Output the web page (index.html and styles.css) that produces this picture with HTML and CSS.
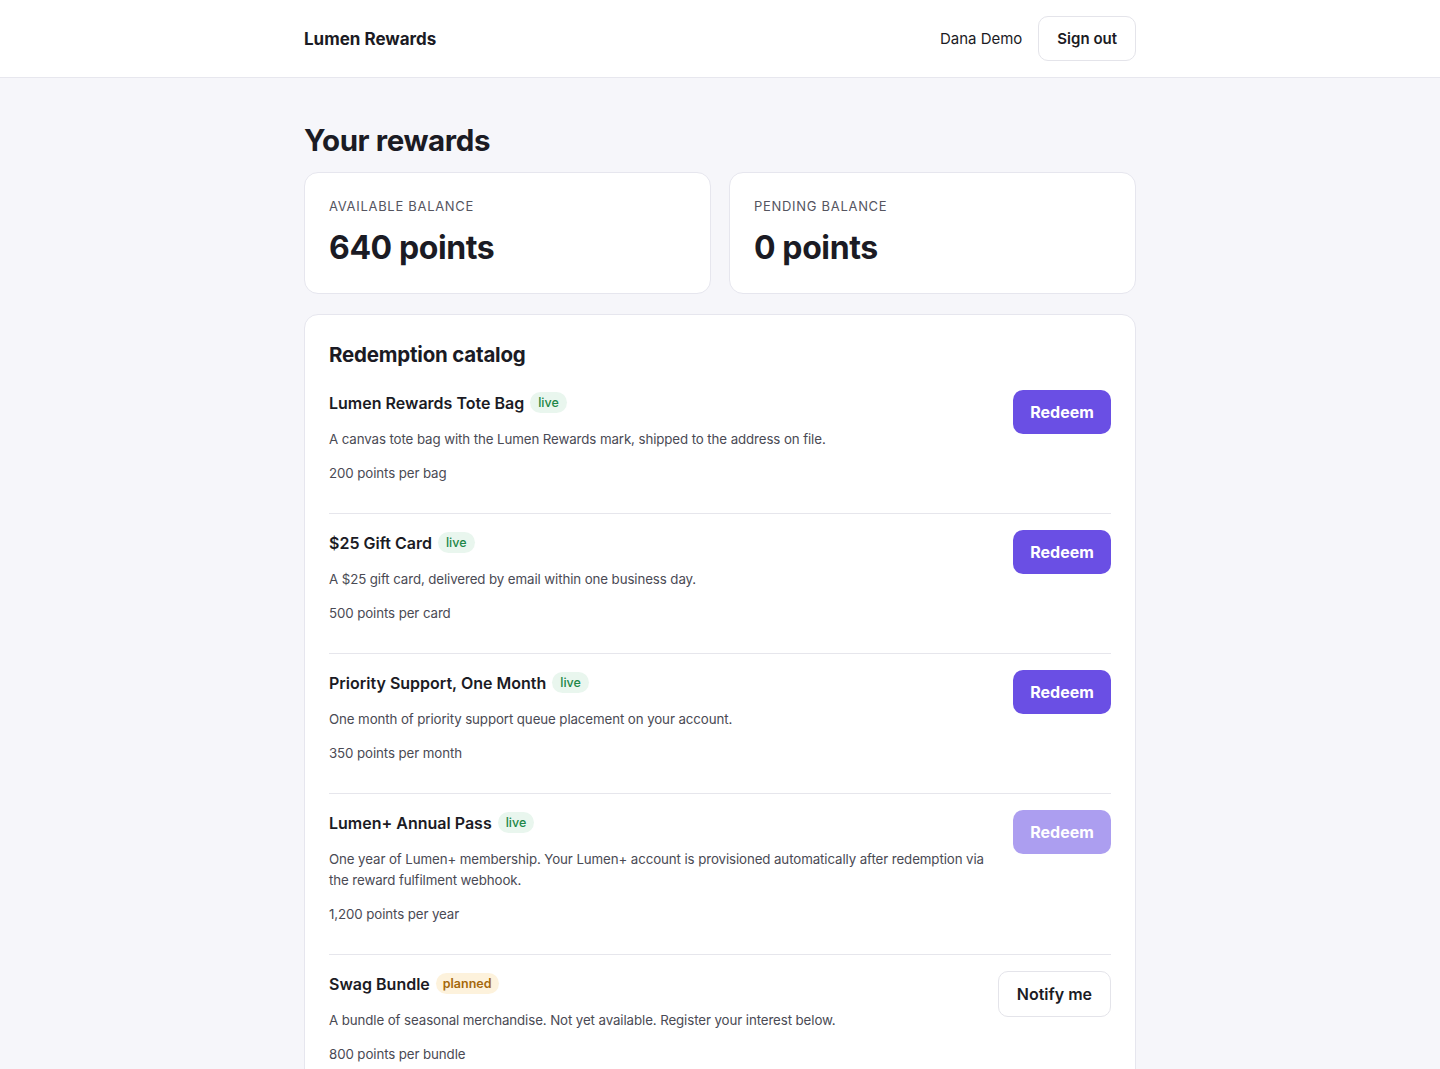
FILE: index.html
```html
<!DOCTYPE html>
<html lang="en">
<head>
<meta charset="utf-8">
<title>Lumen Rewards</title>
<link rel="stylesheet" href="styles.css">
</head>
<body>
<header class="topbar">
  <div class="container topbar-inner">
    <div class="brand">Lumen Rewards</div>
    <div class="user">
      <span class="user-name">Dana Demo</span>
      <button class="btn btn-outline">Sign out</button>
    </div>
  </div>
</header>
<main class="container main">
  <h1 class="page-title">Your rewards</h1>
  <section class="balances">
    <div class="card balance-card">
      <div class="balance-label">AVAILABLE BALANCE</div>
      <div class="balance-value">640 points</div>
    </div>
    <div class="card balance-card">
      <div class="balance-label">PENDING BALANCE</div>
      <div class="balance-value">0 points</div>
    </div>
  </section>
  <section class="card catalog">
    <h2 class="catalog-title">Redemption catalog</h2>
    <div class="item">
      <div class="item-body">
        <div class="item-head"><span class="item-name">Lumen Rewards Tote Bag</span><span class="badge badge-live">live</span></div>
        <p class="item-desc">A canvas tote bag with the Lumen Rewards mark, shipped to the address on file.</p>
        <p class="item-price">200 points per bag</p>
      </div>
      <button class="btn btn-primary">Redeem</button>
    </div>
    <div class="item">
      <div class="item-body">
        <div class="item-head"><span class="item-name">$25 Gift Card</span><span class="badge badge-live">live</span></div>
        <p class="item-desc">A $25 gift card, delivered by email within one business day.</p>
        <p class="item-price">500 points per card</p>
      </div>
      <button class="btn btn-primary">Redeem</button>
    </div>
    <div class="item">
      <div class="item-body">
        <div class="item-head"><span class="item-name">Priority Support, One Month</span><span class="badge badge-live">live</span></div>
        <p class="item-desc">One month of priority support queue placement on your account.</p>
        <p class="item-price">350 points per month</p>
      </div>
      <button class="btn btn-primary">Redeem</button>
    </div>
    <div class="item">
      <div class="item-body">
        <div class="item-head"><span class="item-name">Lumen+ Annual Pass</span><span class="badge badge-live">live</span></div>
        <p class="item-desc">One year of Lumen+ membership. Your Lumen+ account is provisioned automatically after redemption via the reward fulfilment webhook.</p>
        <p class="item-price">1,200 points per year</p>
      </div>
      <button class="btn btn-primary" disabled>Redeem</button>
    </div>
    <div class="item">
      <div class="item-body">
        <div class="item-head"><span class="item-name">Swag Bundle</span><span class="badge badge-planned">planned</span></div>
        <p class="item-desc">A bundle of seasonal merchandise. Not yet available. Register your interest below.</p>
        <p class="item-price">800 points per bundle</p>
      </div>
      <button class="btn btn-outline btn-notify">Notify me</button>
    </div>
  </section>
</main>
</body>
</html>
```

FILE: styles.css
```css
* { box-sizing: border-box; }
html, body { margin: 0; padding: 0; }
body {
  font-family: Inter, "Noto Sans", "Liberation Sans", sans-serif;
  background: #f6f6fa;
  color: #1b1b24;
}
.container {
  width: 832px;
  margin: 0 auto;
}
.topbar {
  background: #ffffff;
  border-bottom: 1px solid #e7e7ee;
}
.topbar-inner {
  height: 77px;
  display: flex;
  align-items: center;
  justify-content: space-between;
}
.brand {
  font-size: 17px;
  font-weight: 700;
  color: #1b1b24;
}
.user {
  display: flex;
  align-items: center;
  gap: 16px;
}
.user-name {
  font-size: 15px;
  color: #1b1b24;
}
.btn {
  font-family: inherit;
  border-radius: 10px;
  cursor: pointer;
}
.btn-outline {
  background: #ffffff;
  border: 1px solid #e4e4ea;
  color: #1b1b24;
  font-size: 15px;
  font-weight: 600;
  height: 45px;
  padding: 0 18px;
}
.main {
  padding-top: 44px;
  padding-bottom: 40px;
}
.page-title {
  margin: 0 0 14px;
  font-size: 29.5px;
  line-height: 36px;
  font-weight: 700;
  letter-spacing: -0.4px;
  color: #1b1b24;
}
.card {
  background: #ffffff;
  border: 1px solid #e6e6ee;
  border-radius: 14px;
}
.balances {
  display: grid;
  grid-template-columns: 1fr 1fr;
  gap: 18px;
}
.balance-card {
  padding: 24px 24px 25px;
}
.balance-label {
  font-size: 13px;
  line-height: 18px;
  letter-spacing: 0.7px;
  color: #55555f;
}
.balance-value {
  margin-top: 13px;
  font-size: 32px;
  line-height: 40px;
  font-weight: 700;
  letter-spacing: -0.4px;
  color: #1b1b24;
}
.catalog {
  margin-top: 20px;
  padding: 26px 24px 8px;
}
.catalog-title {
  margin: 0 0 6px;
  font-size: 20.5px;
  line-height: 27px;
  font-weight: 700;
  letter-spacing: -0.2px;
  color: #1b1b24;
}
.item {
  display: flex;
  align-items: flex-start;
  gap: 8px;
  padding: 16px 0;
  border-bottom: 1px solid #e6e6ec;
}
.item:last-child { border-bottom: none; }
.item-body {
  flex: 1;
  min-width: 0;
}
.item-head {
  display: flex;
  align-items: center;
  gap: 6px;
  height: 25px;
}
.item-name {
  font-size: 16px;
  font-weight: 600;
  color: #1b1b24;
}
.badge {
  font-size: 12.5px;
  line-height: 17px;
  font-weight: 500;
  padding: 2px 8px;
  border-radius: 999px;
}
.badge-live {
  background: #e9f6ee;
  color: #1e8748;
}
.badge-planned {
  background: #fdf2dc;
  color: #a5680a;
  font-weight: 600;
  padding: 2px 7px;
}
.item-desc, .item-price {
  font-size: 13.3px;
  line-height: 21px;
  letter-spacing: -0.1px;
  color: #4a4a54;
}
.item-desc {
  margin: 14px 0 0;
}
.item-price {
  margin: 13px 0;
}
.btn-primary {
  background: #6a4fe4;
  color: #ffffff;
  border: none;
  font-size: 16px;
  font-weight: 700;
  height: 44px;
  width: 98px;
  flex-shrink: 0;
}
.btn-primary:disabled {
  opacity: 0.55;
  cursor: default;
}
.btn-notify {
  height: 46px;
  font-size: 16px;
  padding: 0 18px;
  flex-shrink: 0;
}
```
